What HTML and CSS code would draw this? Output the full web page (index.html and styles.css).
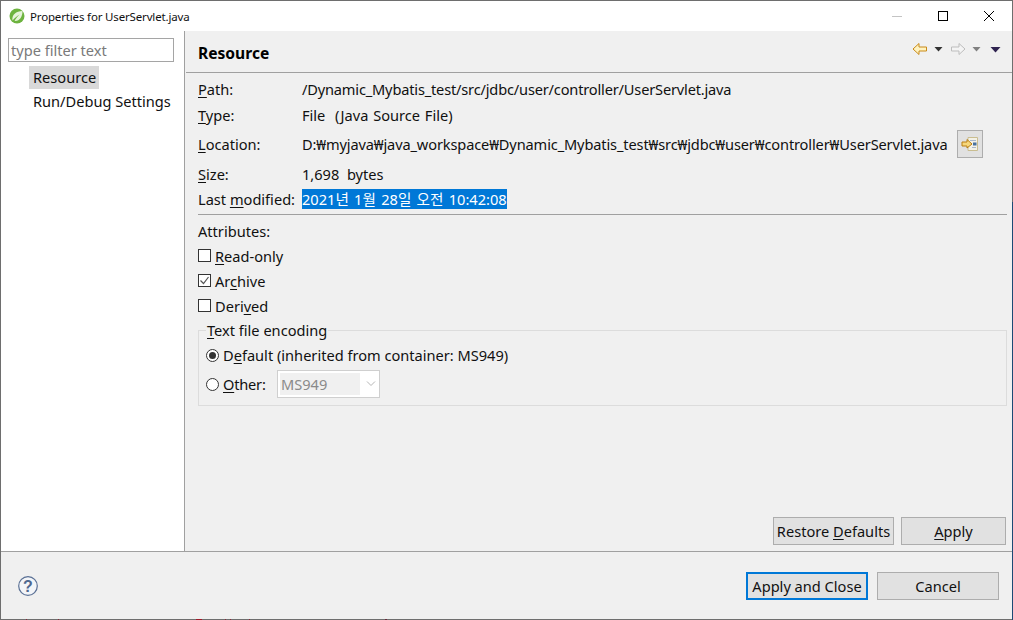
FILE: index.html
```html
<!DOCTYPE html>
<html lang="ko">
<head>
<meta charset="utf-8">
<title>Properties for UserServlet.java</title>
<link rel="stylesheet" href="styles.css">
</head>
<body>
<div class="window">
  <header class="titlebar">
    <svg class="app-icon" width="16" height="16" viewBox="0 0 16 16"><circle cx="8" cy="8" r="7.500" fill="#6db33f"/><path d="M3.500 12.500C2.500 7 7 3 13.500 3C13.500 9.500 10 13.500 5.500 12.800C7 10.500 9 8 10.500 6.500C8 8 5.500 10 3.500 12.500Z" fill="#e6f3da"/></svg>
    <span class="title">Properties for UserServlet.java</span>
    <div class="winctl">
      <span class="wc"><svg width="12" height="12" viewBox="0 0 12 12"><path d="M1 6.500H11" stroke="#c4c4c4" fill="none"/></svg></span>
      <span class="wc"><svg width="12" height="12" viewBox="0 0 12 12"><rect x="1.500" y="1.500" width="9" height="9" fill="none" stroke="#000"/></svg></span>
      <span class="wc"><svg width="12" height="12" viewBox="0 0 12 12"><path d="M1 1L11 11M11 1L1 11" stroke="#000" fill="none"/></svg></span>
    </div>
  </header>
  <div class="main">
    <aside class="sidebar">
      <div class="filter">type filter text</div>
      <ul class="tree">
        <li class="selected">Resource</li>
        <li>Run/Debug Settings</li>
      </ul>
    </aside>
    <section class="page">
      <div class="page-head">
        <h1>Resource</h1>
        <div class="nav">
          <svg width="16" height="14" viewBox="0 0 16 14"><path d="M1 7L7 1.500V5H14.500V9H7V12.500Z" fill="#fff3c0" stroke="#c98a18"/></svg>
          <svg class="tri" width="9" height="5" viewBox="0 0 9 5"><path d="M0.500 0H8.500L4.500 4.500Z" fill="#333"/></svg>
          <svg class="fwd" width="16" height="14" viewBox="0 0 16 14"><path d="M15 7L9 1.500V5H1.500V9H9V12.500Z" fill="#f4f4f4" stroke="#bdbdbd"/></svg>
          <svg class="tri" width="9" height="5" viewBox="0 0 9 5"><path d="M0.500 0H8.500L4.500 4.500Z" fill="#808080"/></svg>
          <svg class="tri menu" width="11" height="6" viewBox="0 0 11 6"><path d="M0.500 0H10.500L5.500 5.500Z" fill="#2f2350"/></svg>
        </div>
      </div>
      <div class="page-body">
        <div class="info">
          <div class="row r-path"><span class="lbl"><u>P</u>ath:</span><span class="v-path">/Dynamic_Mybatis_test/src/jdbc/user/controller/UserServlet.java</span></div>
          <div class="row r-type"><span class="lbl"><u>T</u>ype:</span><span class="v-type">File &nbsp;(Java Source File)</span></div>
          <div class="row r-loc"><span class="lbl"><u>L</u>ocation:</span><span class="v-loc">D:₩myjava₩java_workspace₩Dynamic_Mybatis_test₩src₩jdbc₩user₩controller₩UserServlet.java</span>
            <button class="iconbtn" type="button" aria-label="Show in system explorer"><svg width="18" height="16" viewBox="0 0 18 16"><path d="M7 1.500H16.500V14.500H7Z" fill="#f3f1e6" stroke="#c9bd90"/><path d="M9 4.500H15M11 11.500H15" stroke="#a9b8cc"/><rect x="12" y="6.500" width="3.500" height="3" fill="#47719f"/><path d="M1 6H6V3.500L11 8L6 12V10H1Z" fill="#f6d77c" stroke="#b97e13"/></svg></button></div>
          <div class="row r-size"><span class="lbl"><u>S</u>ize:</span><span>1,698 &nbsp;bytes</span></div>
          <div class="row r-mod"><span class="lbl">Last <u>m</u>odified:</span><span class="sel">2021년 1월 28일 오전 10:42:08</span></div>
        </div>
        <hr class="sep">
        <div class="attr-title">Attributes:</div>
        <label class="check"><span class="box"></span><span><u>R</u>ead-only</span></label>
        <label class="check"><span class="box"><svg width="11" height="11" viewBox="0 0 11 11"><path d="M1.500 5.500L4.500 8.500L9.500 2" fill="none" stroke="#555" stroke-width="1.200"/></svg></span><span>Ar<u>c</u>hive</span></label>
        <label class="check"><span class="box"></span><span>Deri<u>v</u>ed</span></label>
        <fieldset class="encoding">
          <legend><u>T</u>ext file encoding</legend>
          <div class="radio r-default"><span class="dot on"></span><span>D<u>e</u>fault (inherited from container: MS949)</span></div>
          <div class="radio r-other"><span class="dot"></span><span class="other"><u>O</u>ther:</span>
            <span class="combo"><span class="combo-val">MS949</span><svg width="10" height="6" viewBox="0 0 10 6"><path d="M1 0.500L5 4.500L9 0.500" fill="none" stroke="#b5b5b5"/></svg></span>
          </div>
        </fieldset>
        <div class="page-actions">
          <button class="btn restore" type="button">Restore <u>D</u>efaults</button>
          <button class="btn apply" type="button"><u>A</u>pply</button>
        </div>
      </div>
    </section>
  </div>
  <footer class="footer">
    <svg class="help" width="20" height="20" viewBox="0 0 20 20"><circle cx="10" cy="10" r="9.300" fill="#f3f5f8" stroke="#5a7095" stroke-width="1.200"/><text x="10" y="15.500" text-anchor="middle" class="q">?</text></svg>
    <div class="foot-actions">
      <button class="btn primary" type="button">Apply and Close</button>
      <button class="btn cancel" type="button">Cancel</button>
    </div>
  </footer>
</div>
</body>
</html>
```
FILE: styles.css
```css
* { box-sizing: border-box; }
html, body { margin: 0; padding: 0; }
body {
  width: 1013px;
  height: 620px;
  overflow: hidden;
  font-family: "Noto Sans", "Noto Sans CJK KR", sans-serif;
  font-size: 14.6px;
  color: #111;
  background: #f0f0f0;
}
u { text-underline-offset: 2px; text-decoration-thickness: 1px; }
.window {
  width: 1013px;
  height: 620px;
  border: 1px solid #6e6e6e;
  display: flex;
  flex-direction: column;
  position: relative;
}
.window::after {
  content: "";
  position: absolute;
  top: 201px;
  right: -1px;
  bottom: -1px;
  width: 1px;
  background: #1c4a75;
}
.window::before {
  content: "";
  position: absolute;
  left: -1px;
  bottom: -1px;
  width: 400px;
  height: 1px;
  background: linear-gradient(90deg,
    transparent 26px, #8a2a3a 26px, #8a2a3a 27px,
    transparent 27px, transparent 58px, #8a2a3a 58px, #8a2a3a 59px,
    transparent 59px, transparent 196px, #a01828 196px, #a01828 202px,
    transparent 202px, transparent 225px, #8a2a3a 225px, #8a2a3a 226px,
    transparent 226px, transparent 230px, #8a2a3a 230px, #8a2a3a 231px,
    transparent 231px, transparent 249px, #8a2a3a 249px, #8a2a3a 250px,
    transparent 250px, transparent 385px, #6a2a3a 385px, #6a2a3a 387px,
    transparent 387px);
}
.titlebar {
  height: 30px;
  flex: none;
  background: #fff;
  display: flex;
  align-items: center;
  padding-left: 8px;
  font-size: 11.5px;
  letter-spacing: -0.16px;
}
.app-icon { margin-right: 5px; }
.title { flex: 1; }
.winctl { display: flex; }
.wc { width: 46px; height: 29px; display: flex; align-items: center; justify-content: center; }
.main { flex: 1; display: flex; min-height: 0; }
.sidebar {
  width: 184px;
  flex: none;
  background: #fff;
  border-right: 1px solid #a0a0a0;
  padding: 7px 0 0 7px;
}
.filter {
  width: 166px;
  height: 24px;
  border: 1px solid #a5a5a5;
  padding-left: 2px;
  color: #7a7a7a;
  line-height: 23px;
}
.tree { list-style: none; margin: 4px 0 0 21px; padding: 0; }
.tree li { height: 23px; line-height: 23px; padding: 0 4px; width: max-content; white-space: nowrap; }
.tree li + li { line-height: 25px; }
.tree .selected { background: #d9d9d9; padding-right: 3px; }
.page { flex: 1; min-width: 0; display: flex; flex-direction: column; }
.page-head {
  height: 42px;
  flex: none;
  display: flex;
  justify-content: space-between;
  border-bottom: 1px solid #a0a0a0;
  margin-left: 1px;
  padding-left: 12px;
}
.page-head h1 { margin: 0; font-size: 15.6px; font-weight: 700; line-height: 44px; color: #000; }
.nav { display: flex; align-items: flex-start; padding: 11px 11px 0 0; }
.nav .tri { margin: 5px 0 0 6px; }
.nav .fwd { margin-left: 7px; }
.nav .menu { margin-left: 9px; }
.page-body { flex: 1; padding: 0 5px 0 13px; display: flex; flex-direction: column; min-height: 0; }
.row { display: flex; align-items: center; white-space: nowrap; }
.lbl { width: 104px; flex: none; }
.r-path { height: 26px; margin-top: 3px; }
.r-type { height: 25px; }
.r-loc { height: 33px; }
.r-size { height: 28px; }
.r-mod { height: 22px; }
.v-path { letter-spacing: -0.175px; }
.v-type { word-spacing: 1px; }
.v-loc { letter-spacing: -0.13px; }
.sel { background: #0078d7; color: #fff; line-height: 20px; word-spacing: 1.5px; }
.iconbtn {
  width: 26px;
  height: 28px;
  margin-left: 9px;
  padding: 0;
  background: #e1e1e1;
  border: 1px solid #adadad;
  display: flex;
  align-items: center;
  justify-content: center;
}
.sep { width: 100%; height: 1px; margin: 4px 0 0; border: 0; background: #a0a0a0; }
.attr-title { height: 24px; line-height: 24px; margin-top: 4px; }
.check { height: 25px; display: flex; align-items: center; }
.box {
  width: 13px;
  height: 13px;
  margin-right: 4px;
  border: 1px solid #333;
  background: #fff;
  display: flex;
  align-items: center;
  justify-content: center;
}
.encoding {
  margin: 2px 0 0;
  padding: 0 0 0 6px;
  height: 86px;
  border: 1px solid #dcdcdc;
  min-width: 0;
}
.encoding legend { padding: 0 1px; margin-left: 1px; line-height: 20px; height: 20px; }
.radio { display: flex; align-items: center; }
.r-default { height: 24px; margin-top: 3px; }
.r-other { height: 30px; margin-top: 2px; }
.dot {
  width: 13px;
  height: 13px;
  margin-left: 1px;
  margin-right: 4px;
  border: 1px solid #333;
  border-radius: 50%;
  background: #fff;
  flex: none;
  display: flex;
  align-items: center;
  justify-content: center;
}
.dot.on::before { content: ""; width: 7px; height: 7px; border-radius: 50%; background: #333; }
.other { width: 54px; letter-spacing: -0.2px; }
.combo {
  width: 103px;
  height: 28px;
  border: 1px solid #cfcfcf;
  background: #fff;
  padding: 2px;
  display: flex;
  align-items: center;
}
.combo-val { width: 80px; height: 22px; background: #f0f0f0; color: #8a8a8a; line-height: 22px; padding-left: 1px; }
.combo svg { margin-left: 6px; }
.page-actions { margin: auto 1px 0 0; padding-bottom: 6px; display: flex; justify-content: flex-end; gap: 7px; }
.btn {
  height: 28px;
  padding: 0;
  font: inherit;
  color: #111;
  background: #e1e1e1;
  border: 1px solid #adadad;
}
.restore { width: 121px; }
.apply { width: 105px; }
.footer {
  height: 68px;
  flex: none;
  border-top: 1px solid #a0a0a0;
  display: flex;
  align-items: flex-start;
  justify-content: space-between;
  padding: 23px 13px 0 17px;
}
.help { margin-top: 1px; }
.q { font: 700 16px "Liberation Sans", sans-serif; fill: #4f688f; }
.foot-actions { display: flex; gap: 9px; margin-top: -3px; }
.primary { width: 122px; border: 2px solid #0078d7; }
.cancel { width: 122px; }
```
